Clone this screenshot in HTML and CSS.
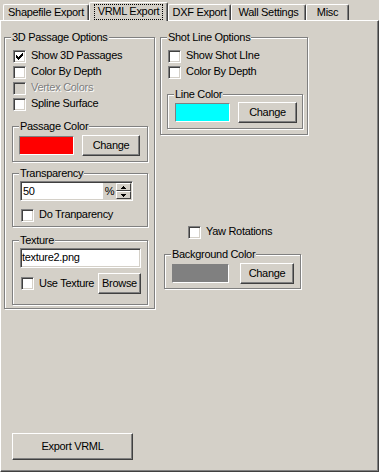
FILE: index.html
```html
<!DOCTYPE html>
<html lang="en">
<head>
  <meta charset="UTF-8">
  <title>VRML Export</title>
  <link rel="stylesheet" href="styles.css">
</head>
<body>

  <div class="tabs">
    <div class="tab tab-shape">Shapefile Export</div>
    <div class="tab tab-active"><span class="focus">VRML Export</span></div>
    <div class="tab tab-dxf">DXF Export</div>
    <div class="tab tab-wall">Wall Settings</div>
    <div class="tab tab-misc">Misc</div>
  </div>

  <div class="panel">
    <div class="columns">

      <fieldset class="group group-passage">
        <legend>3D Passage Options</legend>
        <label class="check"><span class="box"><svg width="7" height="7" viewBox="0 0 7 7"><path d="M0 2h1v3h-1z M1 3h1v3h-1z M2 4h1v3h-1z M3 3h1v3h-1z M4 2h1v3h-1z M5 1h1v3h-1z M6 0h1v3h-1z" fill="#000"/></svg></span>Show 3D Passages</label>
        <label class="check"><span class="box"></span>Color By Depth</label>
        <label class="check disabled"><span class="box"></span>Vertex Colors</label>
        <label class="check"><span class="box"></span>Spline Surface</label>

        <fieldset class="group sub sub-passage">
          <legend>Passage Color</legend>
          <div class="color-row">
            <span class="swatch swatch-red"></span>
            <button class="btn btn-change">Change</button>
          </div>
        </fieldset>

        <fieldset class="group sub sub-trans">
          <legend>Transparency</legend>
          <div class="spin">
            <span class="spin-value">50</span>
            <span class="spin-unit">%</span>
            <span class="spin-btns">
              <span class="spin-btn"><svg width="5" height="3" viewBox="0 0 5 3"><path d="M2 0h1v1h-1z M1 1h3v1h-3z M0 2h5v1h-5z" fill="#000"/></svg></span>
              <span class="spin-btn"><svg width="5" height="3" viewBox="0 0 5 3"><path d="M0 0h5v1h-5z M1 1h3v1h-3z M2 2h1v1h-1z" fill="#000"/></svg></span>
            </span>
          </div>
          <label class="check check-inner"><span class="box"></span>Do Tranparency</label>
        </fieldset>

        <fieldset class="group sub sub-texture">
          <legend>Texture</legend>
          <div class="field field-texture">texture2.png</div>
          <div class="texture-row">
            <label class="check"><span class="box"></span>Use Texture</label>
            <button class="btn btn-browse">Browse</button>
          </div>
        </fieldset>
      </fieldset>

      <div class="right-col">
        <fieldset class="group group-shot">
          <legend>Shot Line Options</legend>
          <label class="check"><span class="box"></span>Show Shot LIne</label>
          <label class="check"><span class="box"></span>Color By Depth</label>

          <fieldset class="group sub sub-line">
            <legend>Line Color</legend>
            <div class="color-row">
              <span class="swatch swatch-cyan"></span>
              <button class="btn btn-change btn-line">Change</button>
            </div>
          </fieldset>
        </fieldset>

        <label class="check yaw"><span class="box"></span>Yaw Rotations</label>

        <fieldset class="group sub sub-bg">
          <legend>Background Color</legend>
          <div class="color-row">
            <span class="swatch swatch-gray"></span>
            <button class="btn btn-change btn-bg">Change</button>
          </div>
        </fieldset>
      </div>

    </div>

    <button class="btn btn-export">Export VRML</button>
  </div>

</body>
</html>
```

FILE: styles.css
```css
* {
  box-sizing: border-box;
}

body {
  margin: 0;
  width: 379px;
  height: 472px;
  overflow: hidden;
  background-color: #d4d0c8;
  color: #000;
  font-family: 'Liberation Sans', Arial, sans-serif;
  font-size: 11px;
  line-height: 13px;
  letter-spacing: -0.3px;
}

/* tab strip */
.tabs {
  display: flex;
  align-items: flex-end;
  height: 20px;
  padding-left: 3px;
}

.tab {
  height: 16px;
  padding-top: 1px;
  border: 1px solid #fff;
  border-bottom: none;
  border-right-color: #404040;
  border-radius: 2px 2px 0 0;
  box-shadow: inset -1px 0 #808080;
  text-align: center;
  white-space: nowrap;
}

.tab-shape { width: 86px; }
.tab-dxf { width: 63px; }
.tab-wall { width: 75px; }
.tab-misc { width: 43px; }

.tab-active {
  position: relative;
  z-index: 1;
  width: 79px;
  height: 19px;
  margin-bottom: -1px;
  background-color: #d4d0c8;
}

.focus {
  display: inline-block;
  padding: 0 3px 2px;
  border: 1px dotted #000;
  line-height: 12px;
}

/* page */
.panel {
  display: flex;
  flex-direction: column;
  height: 452px;
  padding: 10px 0 0 3px;
  border: 1px solid #fff;
  border-right-color: #404040;
  border-bottom-color: #404040;
  box-shadow: inset -1px -1px #808080;
}

.columns {
  display: flex;
  align-items: flex-start;
}

.right-col {
  margin-left: 5px;
}

/* group boxes (legend sits after the padding, so pull it back) */
.group {
  margin: 0;
  padding: 0;
  min-width: 0;
  border: 1px solid #808080;
  box-shadow: inset 1px 1px #fff, 1px 1px #fff;
}

.group legend {
  margin-left: -1px;
  padding: 0 1px;
  line-height: 13px;
  background-color: #d4d0c8;
}

.group-passage {
  width: 151px;
  padding: 5px 0 3px 7px;
}

.group-shot {
  width: 148px;
  padding: 5px 0 5px 7px;
}

.sub {
  width: 136px;
  padding: 1px 0 5px 7px;
}

.sub-passage {
  margin-top: 7px;
  padding-top: 2px;
  padding-left: 6px;
}

.sub-passage legend {
  margin-left: 0;
}

.sub-trans {
  margin-top: 5px;
  padding-bottom: 2px;
}

.sub-texture {
  margin-top: 7px;
  padding-bottom: 10px;
}

.sub-line {
  margin-top: 7px;
  margin-left: -1px;
}

.sub-bg {
  width: 137px;
  margin-top: 7px;
  margin-left: 4px;
  padding-top: 2px;
  padding-bottom: 4px;
}

/* check boxes */
.check {
  display: flex;
  align-items: flex-start;
  height: 16px;
  padding-left: 1px;
  white-space: nowrap;
}

.group-shot .check {
  padding-left: 0;
}

.box {
  display: flex;
  align-items: center;
  justify-content: center;
  flex: none;
  width: 13px;
  height: 13px;
  margin: 1px 5px 0 0;
  background-color: #fff;
  border: 1px solid;
  border-color: #808080 #fff #fff #808080;
  box-shadow: inset 1px 1px #404040, inset -1px -1px #d4d0c8;
}

.box svg {
  display: block;
}

.disabled {
  color: #808080;
  text-shadow: 1px 1px 0 #fff;
}

.disabled .box {
  background-color: #d4d0c8;
}

.check-inner {
  margin-top: 7px;
}

.yaw {
  margin-top: 90px;
  padding-left: 28px;
}

/* colour rows */
.color-row {
  display: flex;
  align-items: center;
  height: 21px;
}

.swatch {
  width: 55px;
  height: 19px;
  border: 1px solid;
  border-color: #808080 #fff #fff #808080;
}

.swatch-red { background-color: #ff0000; }
.swatch-cyan { background-color: #00ffff; }
.swatch-gray { background-color: #808080; width: 57px; }

/* buttons */
.btn {
  padding: 0;
  background-color: #d4d0c8;
  color: #000;
  font: inherit;
  letter-spacing: inherit;
  border: 1px solid;
  border-color: #fff #404040 #404040 #fff;
  box-shadow: inset -1px -1px #808080;
}

.btn-change {
  width: 58px;
  height: 21px;
  margin-left: 8px;
}

.btn-line { width: 59px; }

.btn-bg {
  width: 54px;
  margin-left: 11px;
}

.btn-browse {
  width: 43px;
  height: 21px;
  margin-left: auto;
}

.btn-export {
  width: 121px;
  height: 27px;
  margin: 124px 0 0 8px;
}

/* text fields */
.field {
  height: 20px;
  padding-left: 1px;
  line-height: 16px;
  background-color: #fff;
  border: 1px solid;
  border-color: #808080 #fff #fff #808080;
  box-shadow: inset 1px 1px #404040, inset -1px -1px #d4d0c8;
}

.field-texture {
  width: 121px;
}

.texture-row {
  display: flex;
  align-items: center;
  width: 121px;
  height: 22px;
  margin-top: 4px;
}

.texture-row .check {
  height: 13px;
}

.texture-row .box {
  margin-top: 0;
}

.spin {
  display: flex;
  width: 113px;
  height: 20px;
  padding: 1px;
  line-height: 16px;
  background-color: #fff;
  border: 1px solid;
  border-color: #808080 #fff #fff #808080;
  box-shadow: inset 1px 1px #404040, inset -1px -1px #d4d0c8;
}

.spin-value {
  flex: 1;
  padding-left: 1px;
}

.spin-unit {
  width: 13px;
  text-align: center;
  background-color: #d4d0c8;
}

.spin-btns {
  display: flex;
  flex-direction: column;
  width: 15px;
}

.spin-btn {
  display: flex;
  align-items: center;
  justify-content: center;
  height: 8px;
  background-color: #d4d0c8;
  border: 1px solid;
  border-color: #fff #404040 #404040 #fff;
}
```
